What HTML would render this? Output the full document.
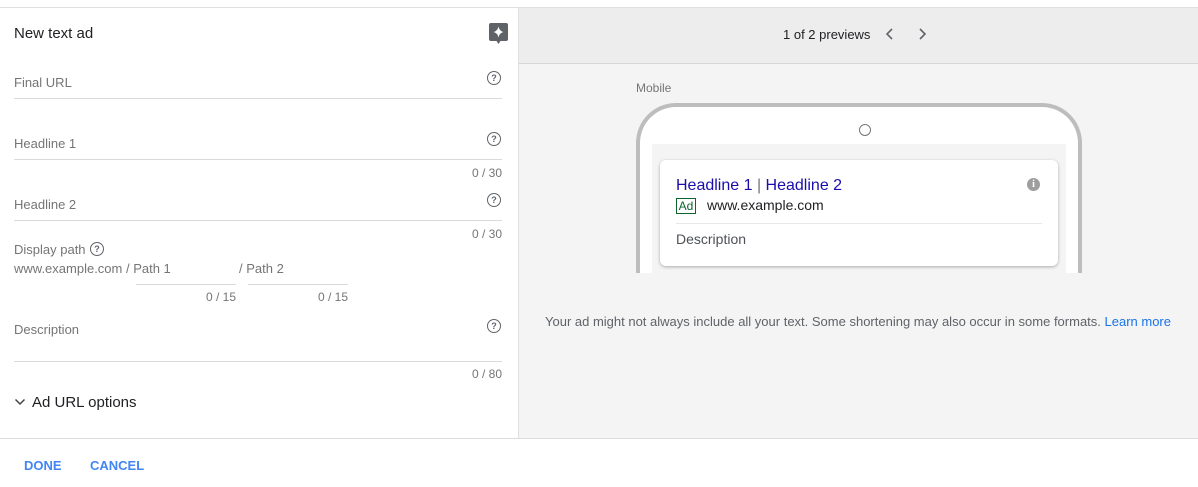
<!DOCTYPE html>
<html><head><style>
*{box-sizing:border-box;margin:0;padding:0}
body{width:1198px;height:487px;overflow:hidden;background:#fff;font-family:"Liberation Sans",Arial,sans-serif;position:relative}
.a{position:absolute}
.lbl{color:#757575;font-size:13px}
.line{height:1px;background:#dadada}
.cnt{color:#757575;font-size:12px;text-align:right}
.q{width:14px;height:14px;border:1.2px solid #5f6368;border-radius:50%;font-size:9px;line-height:12px;text-align:center;color:#5f6368;font-weight:bold}
</style></head><body>
<div class="a" style="left:0;top:7px;width:1198px;height:1px;background:#e0e0e0"></div>
<div class="a" style="left:518px;top:7px;width:1px;height:431px;background:#e0e0e0"></div>
<div class="a" style="left:519px;top:8px;width:679px;height:55px;background:#ededed"></div>
<div class="a" style="left:519px;top:63px;width:679px;height:1px;background:#d6d6d6"></div>
<div class="a" style="left:519px;top:64px;width:679px;height:374px;background:#f4f4f4"></div>
<div class="a" style="left:0;top:438px;width:1198px;height:1px;background:#dcdcdc"></div>

<div class="a" style="left:14px;top:25px;font-size:15px;color:#202124">New text ad</div>
<svg class="a" style="left:489px;top:23px" width="19" height="21" viewBox="0 0 19 21"><rect width="19" height="18" rx="2" fill="#5f6368"/><path d="M7.5 18 L9.5 21 L11.5 18Z" fill="#5f6368"/><path d="M9.5 3.5 Q10.3 8 14.5 9 Q10.3 10 9.5 14.5 Q8.7 10 4.5 9 Q8.7 8 9.5 3.5Z" fill="#fff"/></svg>

<div class="a lbl" style="left:14px;top:75px">Final URL</div>
<div class="a q" style="left:487px;top:71px">?</div>
<div class="a line" style="left:14px;top:98px;width:488px"></div>

<div class="a lbl" style="left:14px;top:136px">Headline 1</div>
<div class="a q" style="left:487px;top:132px">?</div>
<div class="a line" style="left:14px;top:159px;width:488px"></div>
<div class="a cnt" style="left:402px;top:166px;width:100px">0 / 30</div>

<div class="a lbl" style="left:14px;top:197px">Headline 2</div>
<div class="a q" style="left:487px;top:193px">?</div>
<div class="a line" style="left:14px;top:220px;width:488px"></div>
<div class="a cnt" style="left:402px;top:227px;width:100px">0 / 30</div>

<div class="a lbl" style="left:14px;top:242px">Display path</div>
<div class="a q" style="left:90px;top:242px">?</div>
<div class="a lbl" style="left:14px;top:261px">www.example.com / Path 1</div>
<div class="a lbl" style="left:239px;top:261px">/ Path 2</div>
<div class="a line" style="left:136px;top:284px;width:100px"></div>
<div class="a line" style="left:248px;top:284px;width:100px"></div>
<div class="a cnt" style="left:136px;top:290px;width:100px">0 / 15</div>
<div class="a cnt" style="left:248px;top:290px;width:100px">0 / 15</div>

<div class="a lbl" style="left:14px;top:322px">Description</div>
<div class="a q" style="left:487px;top:319px">?</div>
<div class="a line" style="left:14px;top:361px;width:488px"></div>
<div class="a cnt" style="left:402px;top:367px;width:100px">0 / 80</div>

<svg class="a" style="left:14px;top:397px" width="12" height="10" viewBox="0 0 12 10"><path d="M1.5 2.5 L6 7 L10.5 2.5" stroke="#444" stroke-width="1.5" fill="none"/></svg>
<div class="a" style="left:32px;top:394px;font-size:15px;color:#202124">Ad URL options</div>

<div class="a" style="left:24px;top:458px;font-size:13px;font-weight:bold;color:#4285f4">DONE</div>
<div class="a" style="left:90px;top:458px;font-size:13px;font-weight:bold;color:#4285f4">CANCEL</div>

<div class="a" style="left:783px;top:27px;font-size:13px;color:#202124">1 of 2 previews</div>
<svg class="a" style="left:884px;top:27px" width="12" height="14" viewBox="0 0 12 14"><path d="M8 2 L3 7 L8 12" stroke="#5f6368" stroke-width="1.6" fill="none"/></svg>
<svg class="a" style="left:916px;top:27px" width="12" height="14" viewBox="0 0 12 14"><path d="M4 2 L9 7 L4 12" stroke="#5f6368" stroke-width="1.6" fill="none"/></svg>

<div class="a" style="left:636px;top:81px;font-size:12px;color:#757575">Mobile</div>
<div class="a" style="left:636px;top:103px;width:446px;height:170px;border:4px solid #bdbdbd;border-bottom:none;border-radius:40px 40px 0 0;background:#fff"></div>
<div class="a" style="left:859px;top:124px;width:12px;height:12px;border:1px solid #757575;border-radius:50%"></div>
<div class="a" style="left:652px;top:144px;width:414px;height:129px;background:#f4f4f4"></div>
<div class="a" style="left:660px;top:160px;width:398px;height:106px;background:#fff;border-radius:6px;box-shadow:0 1px 3px rgba(0,0,0,.3)"></div>
<div class="a" style="left:676px;top:177px;font-size:16px;color:#1a0dab">Headline 1 <span style="color:#70757a">|</span> Headline 2</div>
<div class="a" style="left:1027px;top:178px;width:13px;height:13px;border-radius:50%;background:#9e9e9e;color:#fff;font-size:10px;font-weight:bold;text-align:center;line-height:13px;font-family:'Liberation Serif',serif">i</div>
<div class="a" style="left:676px;top:198px;width:20px;height:16px;border:1px solid #0d652d;color:#0d652d;font-size:12px;line-height:14px;text-align:center">Ad</div>
<div class="a" style="left:707px;top:197px;font-size:14px;color:#202124">www.example.com</div>
<div class="a" style="left:676px;top:223px;width:366px;height:1px;background:#e8e8e8"></div>
<div class="a" style="left:676px;top:231px;font-size:14px;color:#4d5156">Description</div>

<div class="a" style="left:545px;top:314px;font-size:13px;color:#5f6368;white-space:nowrap">Your ad might not always include all your text. Some shortening may also occur in some formats. <span style="color:#1a73e8">Learn more</span></div>
</body></html>
